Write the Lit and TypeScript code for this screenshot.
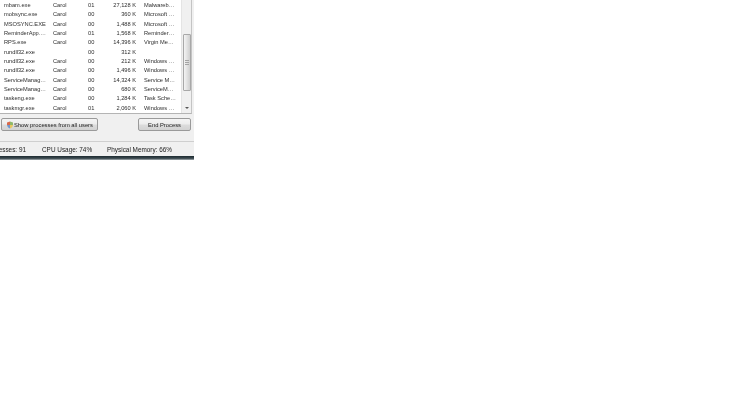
import { LitElement, html, css, svg } from "lit";
import { customElement } from "lit/decorators.js";

const rows: [string, string, string, string, string][] = [
  ["mbam.exe", "Carol", "01", "27,128 K", "Malwareb…"],
  ["mobsync.exe", "Carol", "00", "360 K", "Microsoft …"],
  ["MSOSYNC.EXE", "Carol", "00", "1,488 K", "Microsoft …"],
  ["ReminderApp.…", "Carol", "01", "1,568 K", "Reminder…"],
  ["RPS.exe", "Carol", "00", "14,396 K", "Virgin Me…"],
  ["rundll32.exe", "", "00", "312 K", ""],
  ["rundll32.exe", "Carol", "00", "212 K", "Windows …"],
  ["rundll32.exe", "Carol", "00", "1,496 K", "Windows …"],
  ["ServiceManag…", "Carol", "00", "14,324 K", "Service M…"],
  ["ServiceManag…", "Carol", "00", "680 K", "ServiceM…"],
  ["taskeng.exe", "Carol", "00", "1,284 K", "Task Sche…"],
  ["taskmgr.exe", "Carol", "01", "2,060 K", "Windows …"],
];

@customElement("app-root")
export class AppRoot extends LitElement {
  static styles = css`
    :host { display: block; width: 750px; height: 409px; background: #fff; overflow: hidden;
      font-family: "Liberation Sans", Arial, sans-serif; color: #2e2e2e; }
    .win { width: 194px; height: 160px; display: flex; flex-direction: column; background: #f0f0f0; filter: blur(0.2px); }
    .list { height: 114px; width: 192px; box-sizing: border-box; background: #fff;
      border-right: 1px solid #c4c4c4; border-bottom: 1px solid #b4b4b4; display: flex; }
    .rows { flex: 1; padding-top: 0.9px; min-width: 0; }
    .row { display: grid; grid-template-columns: 53px 35px 14px 34px 1fr; height: 9.37px; line-height: 9.37px;
      font-size: 5.7px; white-space: nowrap; }
    .c0 { padding-left: 4px; }
    .c3 { text-align: right; }
    .c4 { padding-left: 8px; overflow: hidden; }
    .sb { width: 10px; background: #f0f0f0; border-left: 1px solid #e4e4e4; box-sizing: border-box;
      display: flex; flex-direction: column; align-items: center; }
    .thumb { margin-top: 34px; width: 8px; height: 57px; box-sizing: border-box; border: 1px solid #a8a8a8; border-radius: 1px;
      background: linear-gradient(90deg, #f4f4f4, #e2e2e2 50%, #cfcfcf); display: flex; flex-direction: column;
      align-items: center; justify-content: center; gap: 1px; }
    .grip { width: 4px; height: 1px; background: #a4a4a4; }
    .arrow { margin-top: 16px; width: 0; height: 0; border-left: 2px solid transparent; border-right: 2px solid transparent;
      border-top: 2px solid #555; }
    .actions { height: 27px; display: flex; align-items: flex-start; justify-content: space-between;
      padding: 4px 3px 0 1px; box-sizing: border-box; }
    button { font: inherit; font-size: 5.8px; color: #222; height: 13px; padding: 0; box-sizing: border-box;
      border: 1px solid #9a9a9a; border-radius: 2px; display: flex; align-items: center; justify-content: center;
      background: linear-gradient(#f4f4f4, #ececec 48%, #dcdcdc 52%, #d2d2d2); }
    .show { width: 97px; gap: 0; justify-content: flex-start; padding-left: 4px; }
    .end { width: 53px; }
    .show svg { width: 8px; height: 8px; flex: none; }
    .status { flex: 1; display: flex; align-items: flex-start; font-size: 6.4px; color: #222;
      border-top: 1px solid #cfcfcf; padding-top: 4px; }
    .st { white-space: nowrap; }
    .s1 { width: 42px; box-sizing: border-box; padding-right: 16px; display: flex; justify-content: flex-end; overflow: hidden; }
    .s2 { width: 65px; }
    .band { height: 4px; background: linear-gradient(#1c2a30, #3c4a50 60%, #a8b0b4); }
  `;
  render() {
    return html`<div class="win">
      <div class="list">
        <div class="rows">
          ${rows.map(r => html`<div class="row">
            <span class="c0">${r[0]}</span><span class="c1">${r[1]}</span><span class="c2">${r[2]}</span><span class="c3">${r[3]}</span><span class="c4">${r[4]}</span>
          </div>`)}
        </div>
        <div class="sb">
          <div class="thumb"><i class="grip"></i><i class="grip"></i><i class="grip"></i></div>
          <div class="arrow"></div>
        </div>
      </div>
      <div class="actions">
        <button class="show">
          <svg viewBox="0 0 8 8">
            ${svg`<path d="M4 .5 1 1.5V4h3z" fill="#d9694a"/><path d="M4 .5 7 1.5V4H4z" fill="#8fb86a"/><path d="M1 4h3v3.5C2.4 7 1.3 6 1 4z" fill="#6f97cf"/><path d="M4 4h3c-.3 2-1.4 3-3 3.5z" fill="#e8c860"/>`}
          </svg>
          <span>Show processes from all users</span>
        </button>
        <button class="end">End Process</button>
      </div>
      <div class="status">
        <span class="st s1"><span>Processes: 91</span></span>
        <span class="st s2">CPU Usage: 74%</span>
        <span class="st">Physical Memory: 66%</span>
      </div>
      <div class="band"></div>
    </div>`;
  }
}
